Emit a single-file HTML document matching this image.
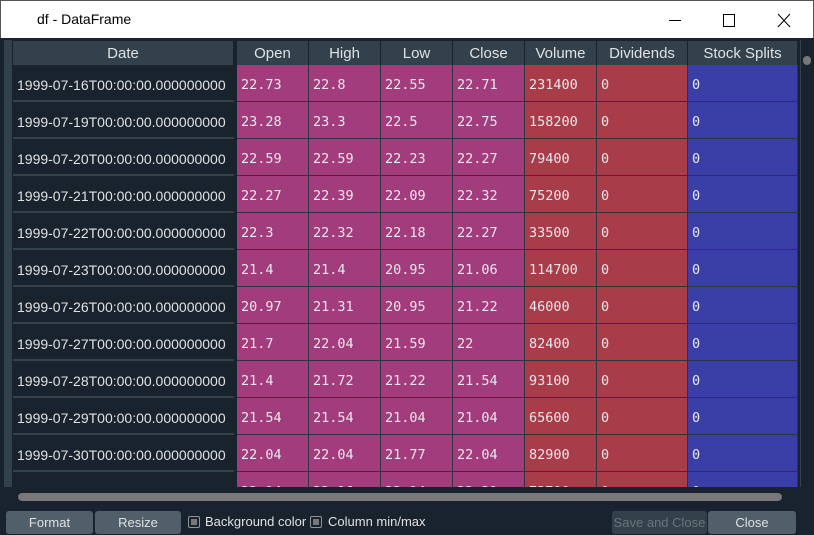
<!DOCTYPE html>
<html><head><style>
*{margin:0;padding:0;box-sizing:border-box}
body{width:814px;height:535px;background:#19232d;position:relative;overflow:hidden;font-family:"Liberation Sans",sans-serif}
.title{position:absolute;left:0;top:0;width:814px;height:38px;background:#fff;border:1px solid #555;border-bottom:none}
.title span{position:absolute;left:36px;top:10px;font-size:14px;color:#000}
.hdr{position:absolute;top:41px;height:24px;background:#32414b;color:#e0e1e3;font-size:15px;text-align:center;line-height:26px;border-right:1px solid #19232d}
.grid{position:absolute;left:237px;top:65px;width:561px;height:422px;overflow:hidden}
.row{position:absolute;left:0;height:37px;width:561px;display:flex}
.row div{height:37px;border-right:1px solid #2b3440;border-bottom:1px solid #2b3440;font-family:"DejaVu Sans Mono","Liberation Mono",monospace;font-size:13.5px;color:#e8e8ee;line-height:40px;padding-left:4px}
.m{background:#a23c7c;width:72px}.v{background:#a83c48;width:72px}.d{background:#a83c48;width:91px}.s{background:#3a3fa8;width:110px}
.idx{position:absolute;left:13px;top:65px;width:221px;height:422px;overflow:hidden}
.idx div{position:absolute;left:0;width:221px;height:37px;border-bottom:2px solid #32414b;color:#e0e1e3;font-size:14px;line-height:40px;padding-left:4px;white-space:nowrap}
.btn{position:absolute;top:511px;height:23px;background:#505f69;color:#e0e1e3;font-size:13px;text-align:center;line-height:23px;border-radius:3px}
.cb{position:absolute;top:516px;width:12px;height:12px;border:1px solid #8a959c;background:#19232d;border-radius:2px}
.cb::after{content:"";position:absolute;left:2px;top:2px;width:6px;height:6px;background:#787878}
.lbl{position:absolute;top:514px;color:#e0e1e3;font-size:13px}
</style></head><body>
<div class="title"><span>df - DataFrame</span>
<svg style="position:absolute;left:660px;top:12px" width="150" height="16"><line x1="8" y1="7.5" x2="20" y2="7.5" stroke="#000"/><rect x="62.5" y="1.5" width="11" height="12" fill="none" stroke="#000"/><path d="M117 1L129 14M129 1L117 14" stroke="#000"/></svg></div>
<div style="position:absolute;left:4px;top:40px;width:8px;height:447px;background:#32414b"></div>
<div class="hdr" style="left:13px;width:221px">Date</div>
<div class="hdr" style="left:237px;width:72px">Open</div>
<div class="hdr" style="left:309px;width:72px">High</div>
<div class="hdr" style="left:381px;width:72px">Low</div>
<div class="hdr" style="left:453px;width:72px">Close</div>
<div class="hdr" style="left:525px;width:72px">Volume</div>
<div class="hdr" style="left:597px;width:91px">Dividends</div>
<div class="hdr" style="left:688px;width:110px">Stock Splits</div>
<div class="idx">
<div style="top:0">1999-07-16T00:00:00.000000000</div>
<div style="top:37px">1999-07-19T00:00:00.000000000</div>
<div style="top:74px">1999-07-20T00:00:00.000000000</div>
<div style="top:111px">1999-07-21T00:00:00.000000000</div>
<div style="top:148px">1999-07-22T00:00:00.000000000</div>
<div style="top:185px">1999-07-23T00:00:00.000000000</div>
<div style="top:222px">1999-07-26T00:00:00.000000000</div>
<div style="top:259px">1999-07-27T00:00:00.000000000</div>
<div style="top:296px">1999-07-28T00:00:00.000000000</div>
<div style="top:333px">1999-07-29T00:00:00.000000000</div>
<div style="top:370px">1999-07-30T00:00:00.000000000</div>
<div style="top:407px">1999-08-02T00:00:00.000000000</div>
</div>
<div class="grid">
<div class="row" style="top:0"><div class="m">22.73</div><div class="m">22.8</div><div class="m">22.55</div><div class="m">22.71</div><div class="v">231400</div><div class="d">0</div><div class="s">0</div></div>
<div class="row" style="top:37px"><div class="m">23.28</div><div class="m">23.3</div><div class="m">22.5</div><div class="m">22.75</div><div class="v">158200</div><div class="d">0</div><div class="s">0</div></div>
<div class="row" style="top:74px"><div class="m">22.59</div><div class="m">22.59</div><div class="m">22.23</div><div class="m">22.27</div><div class="v">79400</div><div class="d">0</div><div class="s">0</div></div>
<div class="row" style="top:111px"><div class="m">22.27</div><div class="m">22.39</div><div class="m">22.09</div><div class="m">22.32</div><div class="v">75200</div><div class="d">0</div><div class="s">0</div></div>
<div class="row" style="top:148px"><div class="m">22.3</div><div class="m">22.32</div><div class="m">22.18</div><div class="m">22.27</div><div class="v">33500</div><div class="d">0</div><div class="s">0</div></div>
<div class="row" style="top:185px"><div class="m">21.4</div><div class="m">21.4</div><div class="m">20.95</div><div class="m">21.06</div><div class="v">114700</div><div class="d">0</div><div class="s">0</div></div>
<div class="row" style="top:222px"><div class="m">20.97</div><div class="m">21.31</div><div class="m">20.95</div><div class="m">21.22</div><div class="v">46000</div><div class="d">0</div><div class="s">0</div></div>
<div class="row" style="top:259px"><div class="m">21.7</div><div class="m">22.04</div><div class="m">21.59</div><div class="m">22</div><div class="v">82400</div><div class="d">0</div><div class="s">0</div></div>
<div class="row" style="top:296px"><div class="m">21.4</div><div class="m">21.72</div><div class="m">21.22</div><div class="m">21.54</div><div class="v">93100</div><div class="d">0</div><div class="s">0</div></div>
<div class="row" style="top:333px"><div class="m">21.54</div><div class="m">21.54</div><div class="m">21.04</div><div class="m">21.04</div><div class="v">65600</div><div class="d">0</div><div class="s">0</div></div>
<div class="row" style="top:370px"><div class="m">22.04</div><div class="m">22.04</div><div class="m">21.77</div><div class="m">22.04</div><div class="v">82900</div><div class="d">0</div><div class="s">0</div></div>
<div class="row" style="top:407px"><div class="m">22.14</div><div class="m">22.16</div><div class="m">22.14</div><div class="m">22.21</div><div class="v">73700</div><div class="d">0</div><div class="s">0</div></div>
</div>
<div style="position:absolute;left:800px;top:40px;width:12px;height:447px;background:#19232d;border-left:1px solid #32414b"></div>
<div style="position:absolute;left:803px;top:56px;width:8px;height:9px;border-radius:4px;background:#787878"></div>
<div style="position:absolute;left:18px;top:493px;width:764px;height:8px;border-radius:4px;background:#787878"></div>
<div style="position:absolute;left:0;top:505px;width:814px;height:30px;background:#19232d"></div>
<div class="btn" style="left:6px;width:87px">Format</div>
<div class="btn" style="left:95px;width:86px">Resize</div>
<div class="cb" style="left:188px"></div><div class="lbl" style="left:205px">Background color</div>
<div class="cb" style="left:310px"></div><div class="lbl" style="left:328px">Column min/max</div>
<div class="btn" style="left:612px;width:95px;background:#32414b;color:#6c757b">Save and Close</div>
<div class="btn" style="left:708px;width:88px">Close</div>
</body></html>
